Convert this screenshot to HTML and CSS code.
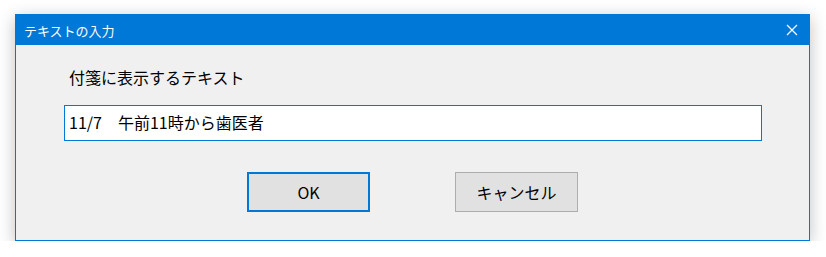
FILE: index.html
```html
<!DOCTYPE html>
<html lang="ja">
<head>
    <meta charset="UTF-8">
    <title>テキストの入力</title>
    <link rel="stylesheet" href="styles.css">
</head>
<body>
    <div class="dialog">
        <div class="titlebar">
            <span class="title">テキストの入力</span>
            <svg class="close" width="12" height="12" viewBox="0 0 12 12">
                <path d="M1 1 L11 11 M11 1 L1 11" stroke="#ffffff" stroke-width="1.2" fill="none"/>
            </svg>
        </div>
        <div class="content">
            <div class="label">付箋に表示するテキスト</div>
            <div class="textbox">11/7　午前11時から歯医者</div>
            <div class="buttons">
                <div class="btn btn-default">OK</div>
                <div class="btn">キャンセル</div>
            </div>
        </div>
    </div>
</body>
</html>
```

FILE: styles.css
```css
body {
    margin: 0;
    padding: 14px 16px 0 15px;
    background-color: #ffffff;
    font-family: "Noto Sans CJK JP", "Noto Sans", sans-serif;
    color: #000000;
}
.dialog {
    width: 793px;
    height: 225px;
    border: 1px solid #0078D7;
    background-color: #F0F0F0;
    box-shadow: 0 4px 16px rgba(0, 0, 0, 0.25);
    display: flex;
    flex-direction: column;
}
.titlebar {
    height: 30px;
    background-color: #0078D7;
    display: flex;
    align-items: center;
    justify-content: space-between;
    padding: 0 10px 0 8px;
}
.title {
    color: #ffffff;
    font-size: 13px;
}
.close {
    display: block;
    margin-right: 1px;
}
.content {
    padding: 21px 47px 0 48px;
}
.label {
    font-size: 16px;
    line-height: 22px;
    padding-left: 5px;
    margin-bottom: 17px;
}
.textbox {
    height: 34px;
    border: 1px solid #0078D7;
    background-color: #ffffff;
    font-size: 16px;
    line-height: 32px;
    padding-left: 4px;
}
.buttons {
    display: flex;
    justify-content: center;
    gap: 85px;
    margin-top: 31px;
    padding-right: 1px;
}
.btn {
    width: 121px;
    height: 38px;
    border: 1px solid #ADADAD;
    background-color: #E1E1E1;
    font-size: 16px;
    display: flex;
    align-items: center;
    justify-content: center;
}
.btn-default {
    width: 119px;
    height: 36px;
    border: 2px solid #0078D7;
}
```
